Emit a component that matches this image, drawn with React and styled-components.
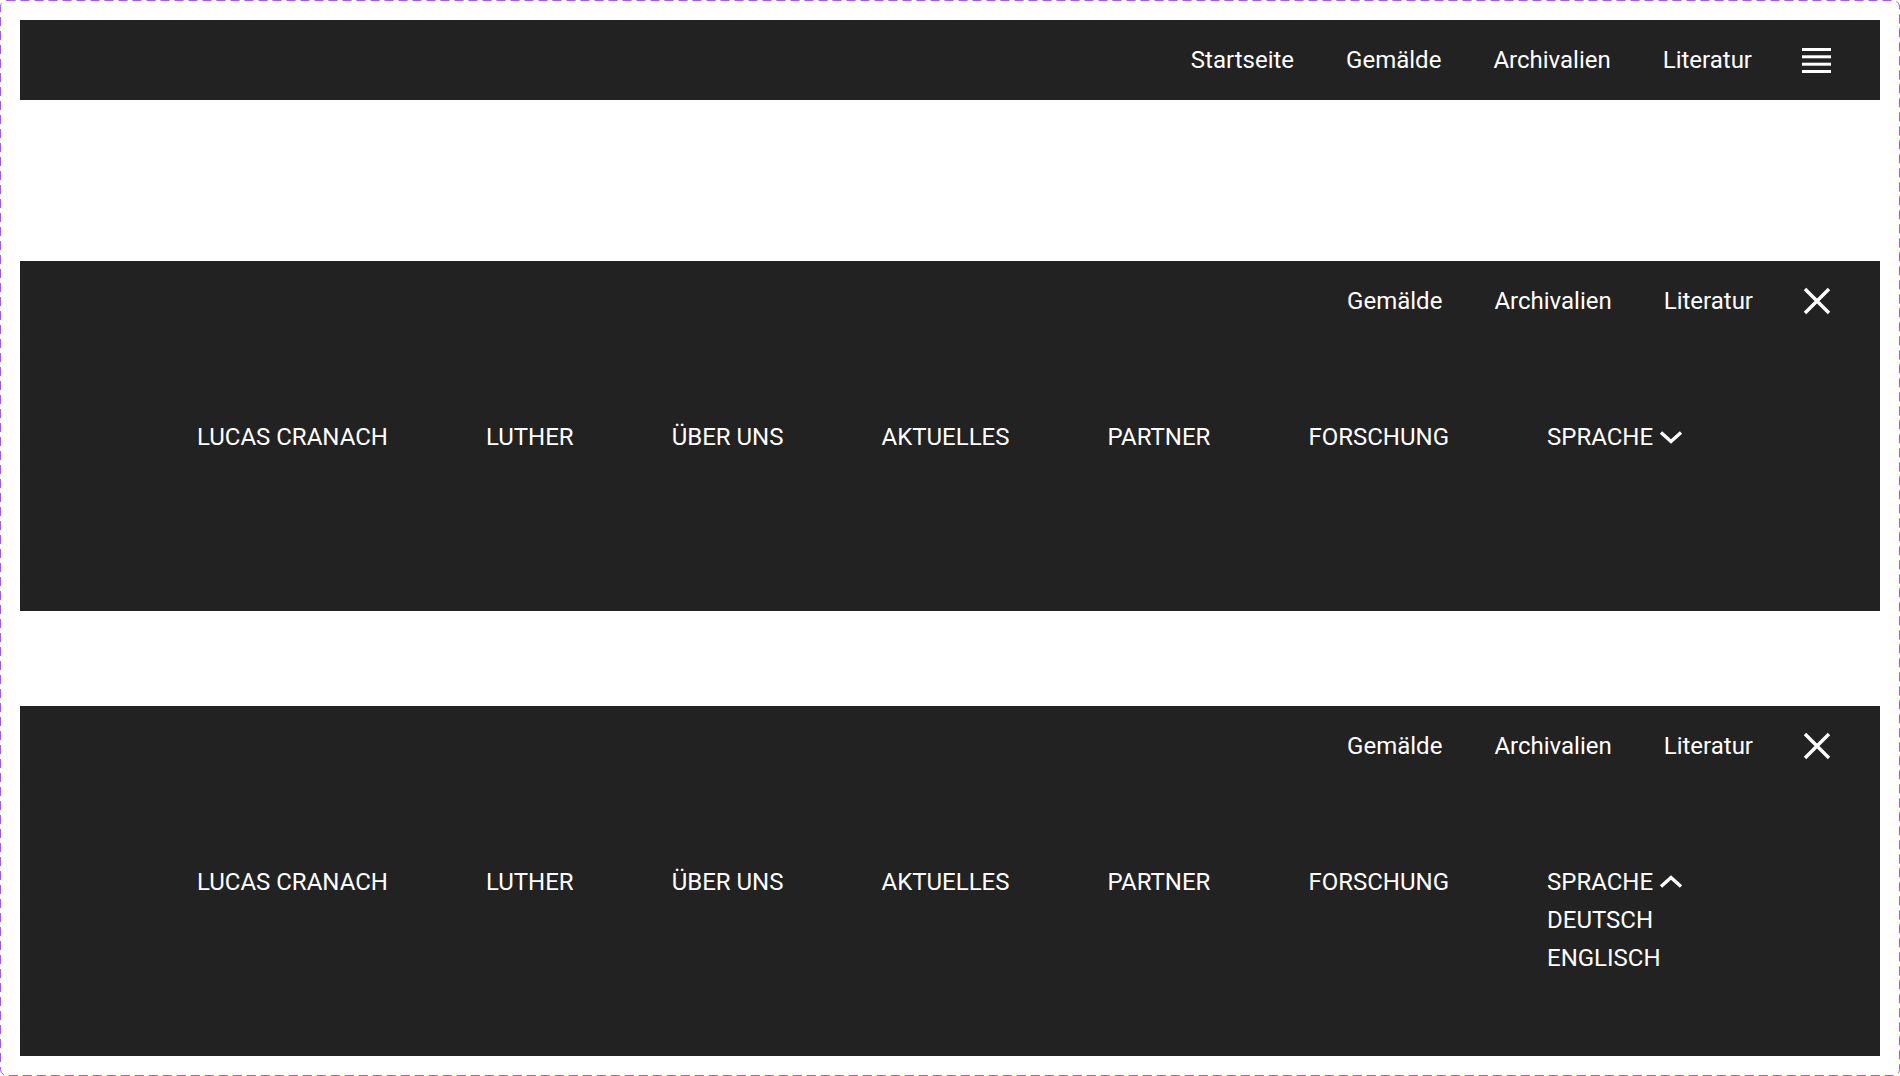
import React from "react";
import styled, { createGlobalStyle } from "styled-components";

const GlobalStyle = createGlobalStyle`
  html, body {
    margin: 0;
    padding: 0;
    background: #ffffff;
  }
  * {
    box-sizing: border-box;
  }
`;

const Canvas = styled.div`
  position: relative;
  width: 1900px;
  height: 1076px;
  padding: 20px;
  display: flex;
  flex-direction: column;
  font-family: Roboto, "Noto Sans", sans-serif;
`;

const Frame = styled.svg`
  position: absolute;
  inset: 0;
  pointer-events: none;
`;

const Header = styled.header`
  background: #222222;
  color: #ffffff;
  height: ${(props) => (props.expanded ? "350px" : "80px")};
  margin-bottom: ${(props) => props.spaceAfter || 0}px;
  display: flex;
  flex-direction: column;
  flex-shrink: 0;
`;

const TopBar = styled.nav`
  height: 80px;
  display: flex;
  justify-content: flex-end;
  align-items: center;
  gap: 52px;
  padding-right: 49px;
  flex-shrink: 0;
`;

const TopLink = styled.a`
  font-size: 24px;
  line-height: 30px;
  color: #ffffff;
  text-decoration: none;
`;

const IconButton = styled.button`
  border: none;
  background: transparent;
  padding: 0;
  margin: 0 0 0 -2px;
  display: flex;
  align-items: center;
  justify-content: center;
  cursor: pointer;
  color: #ffffff;
`;

const MainNav = styled.nav`
  display: flex;
  justify-content: center;
  align-items: flex-start;
  gap: 98px;
  padding-top: 77px;
`;

const MainItem = styled.a`
  font-size: 24px;
  line-height: 38px;
  color: #ffffff;
  text-transform: uppercase;
  text-decoration: none;
  white-space: nowrap;
`;

const LangMenu = styled.div`
  display: flex;
  flex-direction: column;
  padding-right: 20px;
`;

const LangToggle = styled.div`
  display: flex;
  align-items: center;
  gap: 6px;
  font-size: 24px;
  line-height: 38px;
  text-transform: uppercase;
  cursor: pointer;
`;

const LangOption = styled.a`
  font-size: 24px;
  line-height: 38px;
  color: #ffffff;
  text-transform: uppercase;
  text-decoration: none;
`;

const Burger = () => (
  <svg width="29" height="25" viewBox="0 0 29 25">
    <rect x="0" y="0" width="29" height="3" fill="#fff" />
    <rect x="0" y="7.3" width="29" height="3" fill="#fff" />
    <rect x="0" y="14.7" width="29" height="3" fill="#fff" />
    <rect x="0" y="22" width="29" height="3" fill="#fff" />
  </svg>
);

const Close = () => (
  <svg width="28" height="28" viewBox="0 0 28 28">
    <path
      d="M2 2 L26 26 M26 2 L2 26"
      stroke="#fff"
      strokeWidth="3.4"
      fill="none"
    />
  </svg>
);

const Chevron = ({ up }) => (
  <svg width="24" height="14" viewBox="0 0 24 14">
    <polyline
      points={up ? "2,11.5 12,2.5 22,11.5" : "2,2.5 12,11.5 22,2.5"}
      stroke="#fff"
      strokeWidth="3.4"
      fill="none"
    />
  </svg>
);

const mainLinks = [
  "Lucas Cranach",
  "Luther",
  "Über uns",
  "Aktuelles",
  "Partner",
  "Forschung",
];

const NavHeader = ({ expanded, langOpen, spaceAfter }) => (
  <Header expanded={expanded} spaceAfter={spaceAfter}>
    <TopBar>
      {!expanded && <TopLink href="#">Startseite</TopLink>}
      <TopLink href="#">Gemälde</TopLink>
      <TopLink href="#">Archivalien</TopLink>
      <TopLink href="#">Literatur</TopLink>
      <IconButton aria-label={expanded ? "Schließen" : "Menü"}>
        {expanded ? <Close /> : <Burger />}
      </IconButton>
    </TopBar>

    {expanded && (
      <MainNav>
        {mainLinks.map((label) => (
          <MainItem key={label} href="#">
            {label}
          </MainItem>
        ))}
        <LangMenu>
          <LangToggle>
            Sprache
            <Chevron up={langOpen} />
          </LangToggle>
          {langOpen && (
            <>
              <LangOption href="#">Deutsch</LangOption>
              <LangOption href="#">Englisch</LangOption>
            </>
          )}
        </LangMenu>
      </MainNav>
    )}
  </Header>
);

export default function App() {
  return (
    <>
      <GlobalStyle />
      <Canvas>
        <NavHeader spaceAfter={161} />
        <NavHeader expanded spaceAfter={95} />
        <NavHeader expanded langOpen />
        <Frame width="1900" height="1076">
          <rect
            x="0.5"
            y="0.5"
            width="1899"
            height="1075"
            rx="6"
            fill="none"
            stroke="#9b5cf2"
            strokeWidth="1"
            strokeDasharray="9 5"
          />
        </Frame>
      </Canvas>
    </>
  );
}
